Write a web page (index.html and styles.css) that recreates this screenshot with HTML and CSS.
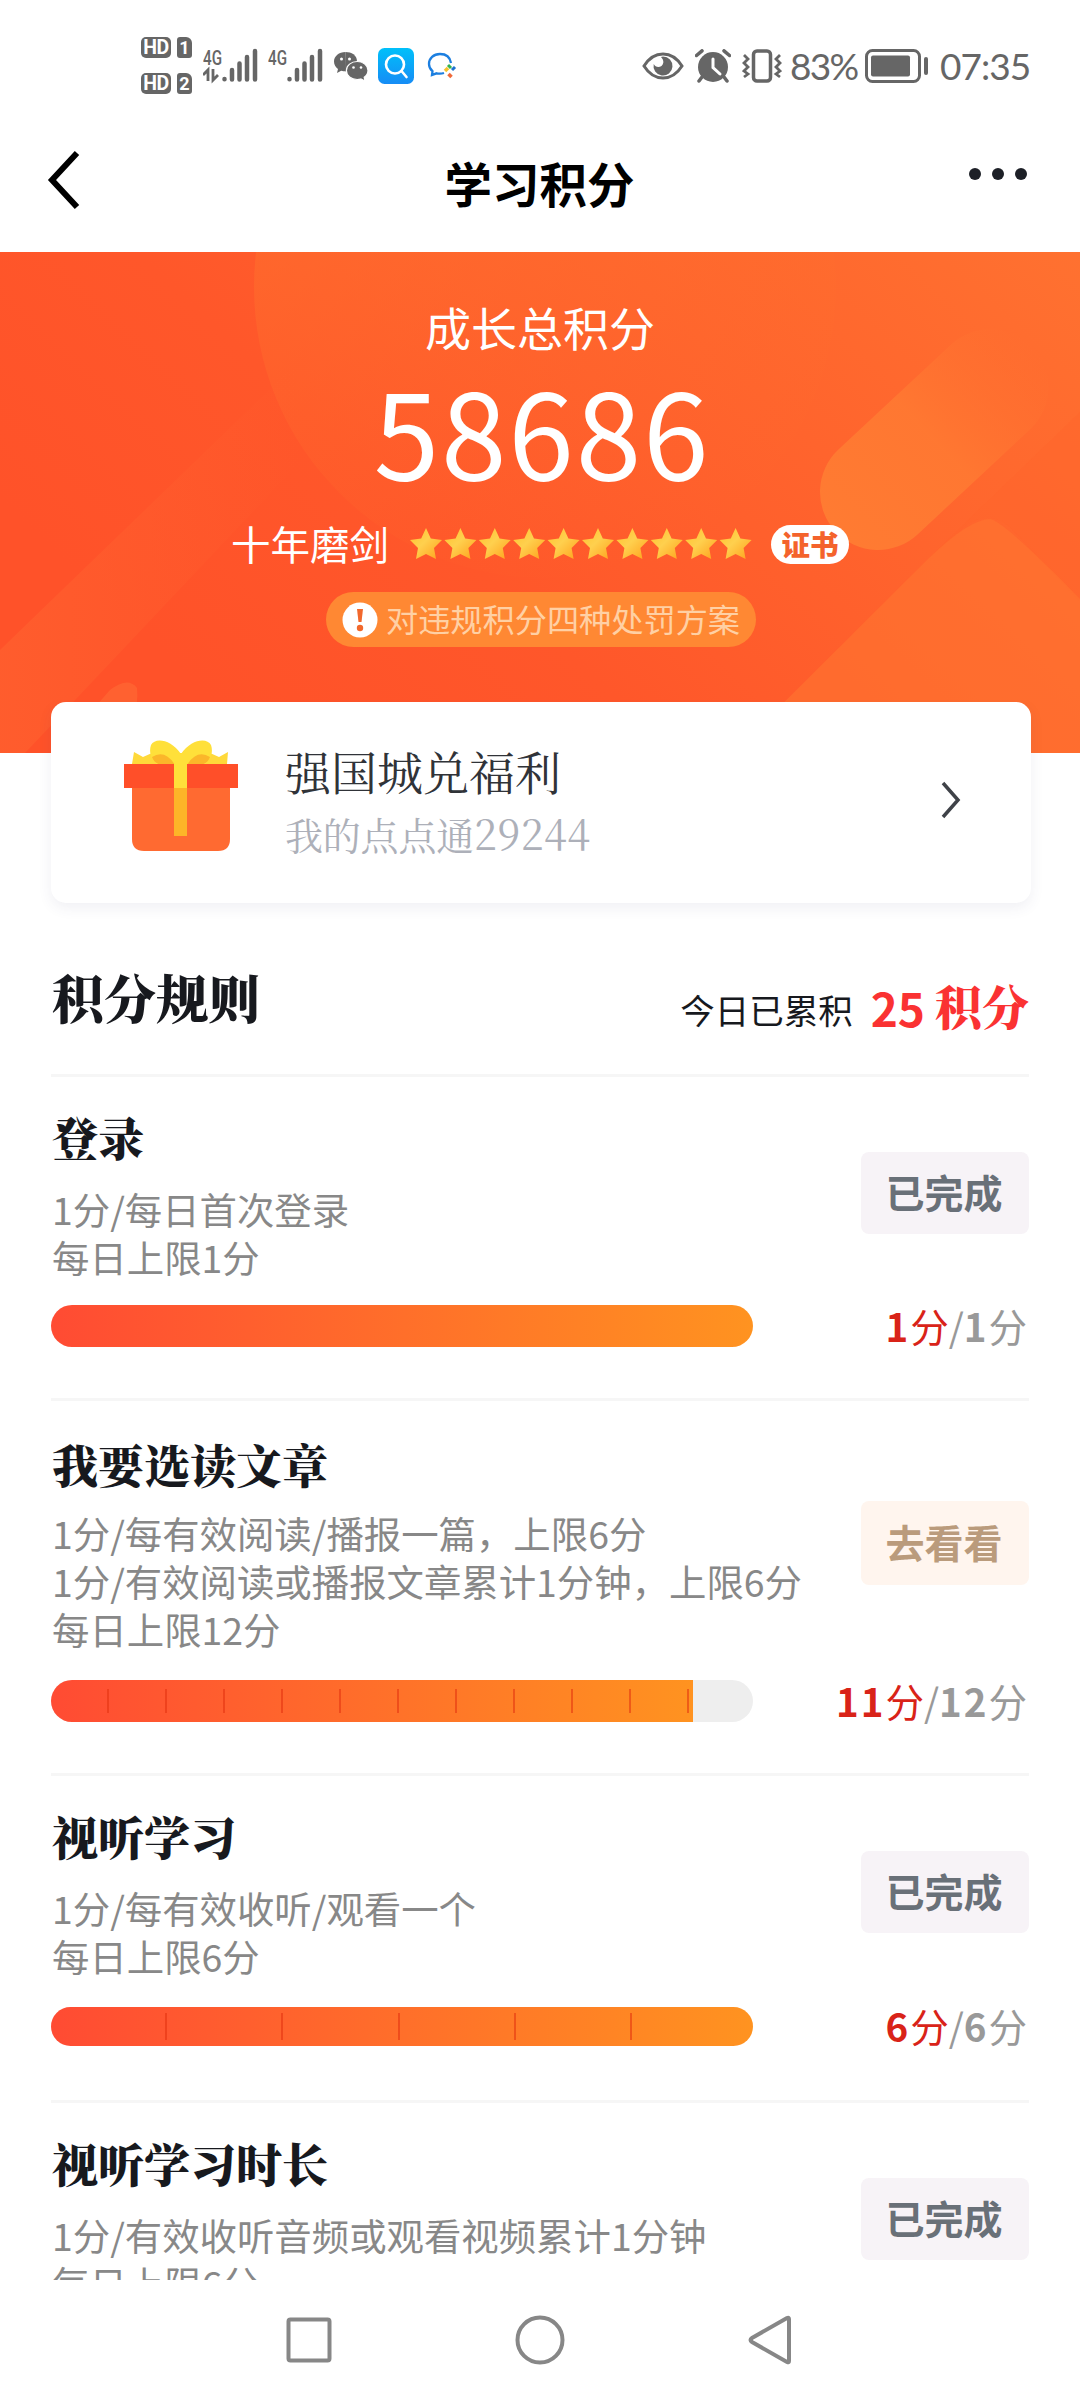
FILE: index.html
```html
<!DOCTYPE html>
<html lang="zh-CN">
<head>
<meta charset="utf-8">
<title>学习积分</title>
<link rel="stylesheet" href="styles.css">
</head>
<body>
<div class="screen">
  <header class="status">
    <div class="status-left">
      <div class="sims">
        <div class="sim"><span class="hd">HD</span><span class="slot">1</span></div>
        <div class="sim"><span class="hd">HD</span><span class="slot">2</span></div>
      </div>
      <svg class="signal" width="55" height="36" viewBox="0 0 55 36">
        <text x="0" y="16.5" textLength="19" lengthAdjust="spacingAndGlyphs">4G</text>
        <path d="M0 27l5-5v11M10 21v11l5-5" fill="none" stroke="#666" stroke-width="2.800"/>
        <path d="M21.500 31v.2M29 22v9.500M36.500 15.500v16M44 9v22.500M52 3v28.500" class="bars"/>
      </svg>
      <svg class="signal" width="55" height="36" viewBox="0 0 55 36">
        <text x="0" y="16.500" textLength="19" lengthAdjust="spacingAndGlyphs">4G</text>
        <path d="M21.500 31v.2M29 22v9.500M36.500 15.500v16M44 9v22.500M52 3v28.500" class="bars"/>
      </svg>
      <svg class="wechat" width="34" height="30" viewBox="0 0 34 30">
        <path d="M11.500 1C5 1 0 5.200 0 10.500c0 3.200 1.600 5.600 4 7.400L3 22l4.200-2.300c1.500.4 3 .6 4.500.6" fill="#666"/>
        <path d="M11 20.300C17 20.500 23 17 23 10.500S17.500 1 11.500 1z" fill="#666"/>
        <path d="M23.200 10.500c-6 0-10.800 4-10.800 9s4.800 9 10.800 9c1.300 0 2.500-.2 3.600-.5l4.200 2-.8-3.800c2.300-1.600 3.800-4 3.800-6.700 0-5-4.800-9-10.800-9z" fill="#666" stroke="#fff" stroke-width="1.200"/>
        <g fill="#fff"><circle cx="7.500" cy="8" r="1.500"/><circle cx="15.500" cy="8" r="1.500"/><circle cx="19.500" cy="16.500" r="1.300"/><circle cx="27" cy="16.500" r="1.300"/></g>
      </svg>
      <svg class="search" width="36" height="36" viewBox="0 0 36 36">
        <defs><linearGradient id="sky" x1="0" y1="0" x2="0" y2="1"><stop stop-color="#00c0fa"/><stop offset="1" stop-color="#168cf5"/></linearGradient></defs>
        <rect width="36" height="36" rx="6.500" fill="url(#sky)"/>
        <circle cx="17" cy="16.500" r="9" fill="none" stroke="#fff" stroke-width="2.600"/>
        <path d="M23.500 23l5 6" stroke="#fff" stroke-width="2.600" stroke-linecap="round"/>
      </svg>
      <svg class="chat" width="30" height="28" viewBox="0 0 30 28">
        <path d="M24 11C23 5 18.500 2 13 2 6.500 2 2 6.500 2 12c0 3 1.300 5.400 3.500 7.200L5 23l4.500-1.700c2.500.6 5 .5 7.500-.3" fill="none" stroke="#1c7fe0" stroke-width="2.300"/>
        <path d="M18 19l3-3" stroke="#f6c22d" stroke-width="3.500"/><path d="M21 13l3 3" stroke="#35b24a" stroke-width="3"/><path d="M25 18l3-3" stroke="#1d73d1" stroke-width="3"/><path d="M21.500 22l3 3" stroke="#ef6a3a" stroke-width="3.500"/>
      </svg>
    </div>
    <div class="status-right">
      <svg width="42" height="30" viewBox="0 0 42 30">
        <path d="M2 15C7 7 13 3 21 3s14 4 19 12c-5 8-11 12-19 12S7 23 2 15z" fill="none" stroke="#666" stroke-width="3"/>
        <path d="M21 5.500a9.500 9.500 0 1 1-9.300 7.500c2 4.500 8.800 3.800 9.600-1.200.3-2-.5-4-2.300-5.800z" fill="#666"/>
      </svg>
      <svg class="alarm" width="36" height="34" viewBox="0 0 36 34">
        <circle cx="18" cy="18" r="15" fill="#666"/>
        <path d="M1.500 6.500L7 1.800M34.500 6.500L29 1.800M7 28l-3 4M29 28l3 4" stroke="#666" stroke-width="3.500" stroke-linecap="round"/>
        <path d="M18 10v8.500l7 6.500" fill="none" stroke="#fff" stroke-width="3" stroke-linecap="round"/>
      </svg>
      <svg class="vibrate" width="40" height="34" viewBox="0 0 40 34">
        <rect x="11.500" y="2" width="17" height="30" rx="3.500" fill="none" stroke="#666" stroke-width="3.500"/>
        <path d="M2 6l4 4-4 4 4 4-4 4 4 3-4 3M38 6l-4 4 4 4-4 4 4 4-4 3 4 3" fill="none" stroke="#666" stroke-width="2.800"/>
      </svg>
      <span class="percent">83%</span>
      <svg class="battery" width="63" height="34" viewBox="0 0 63 34">
        <rect x="1.500" y="1.500" width="53" height="31" rx="6" fill="none" stroke="#666" stroke-width="3"/>
        <rect x="6" y="6.500" width="39" height="21" rx="2" fill="#666"/>
        <path d="M61 10v14" stroke="#666" stroke-width="4" stroke-linecap="round"/>
      </svg>
      <span class="clock">07:35</span>
    </div>
  </header>

  <nav class="titlebar">
    <svg class="back" width="34" height="60" viewBox="0 0 34 60"><path d="M30 3L5 30l25 27" fill="none" stroke="#000" stroke-width="6"/></svg>
    <h1>学习积分</h1>
    <svg class="more" width="60" height="14" viewBox="0 0 60 14"><circle cx="7" cy="7" r="6" fill="#1d2027"/><circle cx="30" cy="7" r="6" fill="#1d2027"/><circle cx="53" cy="7" r="6" fill="#1d2027"/></svg>
  </nav>

  <section class="hero">
    <svg class="hero-art" width="1080" height="501" viewBox="0 0 1080 501">
      <defs>
        <linearGradient id="base" x1="0" y1=".5" x2="1" y2="0"><stop offset="0" stop-color="#ff5229"/><stop offset=".3" stop-color="#ff572a"/><stop offset="1" stop-color="#ff7130"/></linearGradient>
        <linearGradient id="disc" x1=".2" y1="0" x2=".6" y2="1"><stop stop-color="#ff762e" stop-opacity=".7"/><stop offset="1" stop-color="#ff6a2c" stop-opacity="0"/></linearGradient>
        <linearGradient id="cap" x1="0" y1="0" x2="1" y2="0"><stop stop-color="#ff7b32"/><stop offset=".5" stop-color="#ff7a32" stop-opacity=".85"/><stop offset="1" stop-color="#ff7431" stop-opacity="0"/></linearGradient>
        <linearGradient id="band" x1="0" y1="0" x2="1" y2="0"><stop stop-color="#ff6530" stop-opacity=".55"/><stop offset="1" stop-color="#ff6530" stop-opacity="0"/></linearGradient>
      </defs>
      <rect width="1080" height="501" fill="url(#base)"/>
      <circle cx="545" cy="35" r="291" fill="url(#disc)"/>
      <path d="M930 305L1080 160v190L1010 275q-22-18-46 0z" fill="#ff652b" opacity=".3"/>
      <rect x="-58" y="-58" width="270" height="116" rx="58" fill="url(#cap)" transform="translate(878 240) rotate(-43)"/>
      <path d="M733 501L930 305q40-38 60-38 14 2 90 80V501z" fill="#ff7430" opacity=".6"/>
      <path d="M0 398L300 108V210L25 501H0z" fill="url(#band)"/>
      <path d="M55 501L110 438q18-14 27-2 3 30-22 65z" fill="#ff6c36" opacity=".6"/>
    </svg>
    <div class="hero-body">
      <p class="hero-label">成长总积分</p>
      <p class="total">58686</p>
      <div class="rank">
        <span class="rank-name">十年磨剑</span>
        <svg class="stars" width="344" height="34" viewBox="0 0 344 34">
          <defs>
            <linearGradient id="gold" x1="0" y1="0" x2="1" y2="1"><stop stop-color="#ffc02d"/><stop offset=".45" stop-color="#ffd04e"/><stop offset="1" stop-color="#ff9f1a"/></linearGradient>
            <path id="star" d="M17 1l4.800 10.500L33 13l-8 8 2 11-10-5-10 5 2-11-8-8 11.200-1.500z" fill="url(#gold)"/>
          </defs>
          <use href="#star"/><use href="#star" x="34.400"/><use href="#star" x="68.800"/><use href="#star" x="103.200"/><use href="#star" x="137.600"/><use href="#star" x="172"/><use href="#star" x="206.400"/><use href="#star" x="240.800"/><use href="#star" x="275.200"/><use href="#star" x="309.600"/>
        </svg>
        <span class="cert">证书</span>
      </div>
      <div class="notice">
        <svg width="36" height="36" viewBox="0 0 36 36"><circle cx="18" cy="18" r="17.500" fill="#fff"/><path d="M15 7h6l-1.500 13h-3z" fill="#f2682c"/><circle cx="18" cy="26" r="3.200" fill="#f2682c"/></svg>
        <span>对违规积分四种处罚方案</span>
      </div>
    </div>
  </section>

  <main class="content">
    <section class="card">
      <svg class="gift" width="114" height="112" viewBox="0 0 114 112">
        <path d="M8 24l2-12 9 5 9-4h58l9 4 9-5-1 12z" fill="#ffd93a"/>
        <path d="M57 14C47-1 31-3 27 5c-3 9 2 16 6 19h48c4-3 9-10 6-19C83-3 67-1 57 14z" fill="#ffe03a"/>
        <path d="M28 17q13-8 23 8H37q-7-2-9-8zM86 17q-13-8-23 8h14q7-2 9-8z" fill="#fbb62a"/>
        <path d="M51 13h12v14H51z" fill="#ffe03a"/>
        <path d="M8 46h98v53q0 12-12 12H20Q8 111 8 99z" fill="#ff6a31"/>
        <path d="M0 24h114v24H0z" fill="#ff4f29"/>
        <path d="M50 24h13v24H50z" fill="#ffe03a"/><path d="M50 48h13v48H50z" fill="#fdb528"/>
      </svg>
      <div class="card-text"><p class="card-title">强国城兑福利</p><p class="card-sub">我的点点通<span>29244</span></p></div>
      <svg class="go" width="22" height="40" viewBox="0 0 22 40"><path d="M3 3l15 17L3 37" fill="none" stroke="#3f4248" stroke-width="3.500"/></svg>
    </section>

    <div class="rules-head">
      <h2>积分规则</h2>
      <p class="today">今日已累积<b class="today-num">25</b><b class="today-unit">积分</b></p>
    </div>

    <section class="rule rule-login">
      <div class="rule-top">
        <div><h3>登录</h3><p>1分/每日首次登录<br>每日上限1分</p></div>
        <button class="btn">已完成</button>
      </div>
      <div class="rule-bottom">
        <div class="track"><div class="fill" style="width:100%"></div></div>
        <p class="score"><span class="got"><b>1</b>分</span>/<b>1</b>分</p>
      </div>
    </section>

    <section class="rule rule-read">
      <div class="rule-top">
        <div><h3>我要选读文章</h3><p>1分/每有效阅读/播报一篇，上限6分<br>1分/有效阅读或播报文章累计1分钟，上限6分<br>每日上限12分</p></div>
        <button class="btn btn-go">去看看</button>
      </div>
      <div class="rule-bottom">
        <div class="track"><div class="fill" style="width:91.500%"><i></i><i></i><i></i><i></i><i></i><i></i><i></i><i></i><i></i><i></i><i></i></div></div>
        <p class="score"><span class="got"><b>11</b>分</span>/<b>12</b>分</p>
      </div>
    </section>

    <section class="rule rule-watch">
      <div class="rule-top">
        <div><h3>视听学习</h3><p>1分/每有效收听/观看一个<br>每日上限6分</p></div>
        <button class="btn">已完成</button>
      </div>
      <div class="rule-bottom">
        <div class="track steps-6"><div class="fill" style="width:100%"><i></i><i></i><i></i><i></i><i></i></div></div>
        <p class="score"><span class="got"><b>6</b>分</span>/<b>6</b>分</p>
      </div>
    </section>

    <section class="rule">
      <div class="rule-top">
        <div><h3>视听学习时长</h3><p>1分/有效收听音频或观看视频累计1分钟<br>每日上限6分</p></div>
        <button class="btn">已完成</button>
      </div>
    </section>
  </main>

  <footer class="navbar">
    <svg width="50" height="50" viewBox="0 0 50 50"><rect x="4.500" y="4.500" width="41" height="41" rx="2" fill="none" stroke="#878787" stroke-width="4"/></svg>
    <svg width="50" height="50" viewBox="0 0 50 50"><circle cx="25" cy="25" r="22.500" fill="none" stroke="#878787" stroke-width="4"/></svg>
    <svg width="50" height="50" viewBox="0 0 50 50"><path d="M43 4v42q0 2-2 1L6 27q-3-2 0-4L41 3q2-1 2 1z" fill="none" stroke="#878787" stroke-width="4"/></svg>
  </footer>
</div>
</body>
</html>
```
FILE: styles.css
```css
* { box-sizing: border-box; margin: 0; padding: 0; }
body { background: #fff; font-family: "Noto Sans CJK SC", sans-serif; color: #17191e; }
svg { display: block; flex: none; }
.screen { width: 1080px; height: 2400px; overflow: hidden; display: flex; flex-direction: column; }

.status { height: 112px; flex: none; display: flex; justify-content: space-between; padding: 0 50px 0 141px; color: #666; font-family: Lato, sans-serif; }
.status-left, .status-right { display: flex; align-items: center; height: 131px; }
.sims { display: flex; flex-direction: column; gap: 15px; margin-right: 11px; }
.sim { display: flex; gap: 6px; font: 700 18px/22px Roboto, sans-serif; color: #fff; text-align: center; }
.hd { width: 30px; height: 21px; border-radius: 5px; background: #666; font-size: 19.500px; letter-spacing: -.5px; }
.slot { width: 15px; height: 21px; border-radius: 3px 6px 3px 3px; background: #666; }
.signal { margin-right: 10px; }
.signal text { font: 500 20px Roboto, sans-serif; fill: #666; }
.bars { fill: none; stroke: #666; stroke-width: 4.500; stroke-linecap: round; }
.wechat { margin-left: 1px; }
.search { margin-left: 10px; }
.chat { margin-left: 13px; }
.alarm { margin-left: 11px; }
.vibrate { margin-left: 11px; }
.percent { width: 68px; margin: 0 0 1px 8px; font-size: 37px; letter-spacing: -1.700px; white-space: nowrap; }
.battery { margin-left: 7px; }
.clock { margin: 0 0 1px 12px; font-size: 37px; letter-spacing: -1px; width: 90px; white-space: nowrap; }

.titlebar { height: 140px; flex: none; display: flex; justify-content: space-between; align-items: center; padding: 0 52px 6px 47px; }
.back { margin-top: 2px; }
.titlebar h1 { margin-left: 30px; padding-top: 7px; font-size: 47.500px; line-height: 60px; font-weight: 700; color: #000; }
.more { margin-top: -10px; }

.hero { height: 501px; flex: none; display: grid; color: #fff; text-align: center; }
.hero-art, .hero-body { grid-area: 1 / 1; }
.hero-body { display: flex; flex-direction: column; align-items: center; z-index: 1; }
.hero-label { margin-top: 45px; font-size: 46px; line-height: 58px; }
.total { margin: 14px 0 0 4px; font-size: 118px; line-height: 120px; letter-spacing: 1.800px; }
.rank { display: flex; align-items: center; height: 40px; margin-top: 35px; }
.rank-name { font-size: 39.500px; line-height: 40px; margin-top: -3px; }
.stars { margin-left: 20px; }
.cert { margin-left: 18px; width: 78px; height: 39px; border-radius: 20px; background: #fff; color: #f4632c; font-size: 28.500px; line-height: 37px; font-weight: 900; }
.notice { display: flex; align-items: center; justify-content: center; gap: 8px; width: 430px; height: 55px; margin: 28px 0 0 2px; border-radius: 28px; background: #ff8833; color: #ffd0a4; font-size: 32.200px; line-height: 50px; }
.notice span { margin-top: -3px; }

.content { height: 1580px; flex: none; overflow: hidden; margin-top: -53px; padding: 2px 51px 0; position: relative; z-index: 2; }
.card { display: flex; align-items: center; height: 201px; width: 980px; padding: 0 69px 0 73px; border-radius: 15px; background: #fff; box-shadow: 0 5px 14px rgba(60, 60, 120, .08); }
.gift { margin-bottom: 14px; }
.go { margin-bottom: 6px; }
.card-text { flex: 1; margin: 0 0 6px 47px; font-family: "Noto Serif CJK SC", "Noto Sans CJK SC", serif; }
.card-title { font-size: 46px; line-height: 60px; color: #303338; font-weight: 400; }
.card-sub { font-size: 38px; line-height: 50px; margin-top: 8px; color: #adb0b9; font-weight: 400; letter-spacing: -.2px; }
.card-sub span { font-size: 41px; letter-spacing: .4px; }

.rules-head { display: flex; justify-content: space-between; height: 171px; padding: 64px 0 0 1px; width: 978px; }
.rules-head h2, .rule h3, .today-unit { font-family: "Noto Serif CJK SC", "Noto Sans CJK SC", serif; font-weight: 900; }
.rules-head h2 { font-size: 52px; line-height: 60px; }
.today { display: flex; align-items: center; height: 60px; margin-top: 12px; font-size: 34.500px; white-space: nowrap; }
.today-num { margin: -4px 0 0 18px; font-size: 46px; line-height: 60px; color: #fa3232; }
.today-unit { margin: -8px 0 0 10px; font-size: 47px; line-height: 60px; color: #fa3232; }

.rule { width: 978px; border-top: 3px solid #f6f6f6; padding: 36px 0 51px; }
.rule-top { display: flex; justify-content: space-between; align-items: center; }
.rule h3 { font-size: 46px; line-height: 46px; margin: 0 0 26px 1px; }
.rule-top p { margin: 0 0 2px 1px; font-size: 37.400px; line-height: 48px; color: #888; white-space: nowrap; }
.rule-read { padding-top: 39px; }
.rule-read h3 { margin-bottom: 23px; }
.btn { width: 168px; height: 82px; margin-bottom: 10px; flex: none; border: 0; border-radius: 8px; background: #f7f3f7; color: #697078; font: 700 39px/78px "Noto Sans CJK SC", sans-serif; padding: 0 2px 4px 0; }
.btn-go { background: #fff5ee; color: #ba9b7c; height: 84px; }
.rule-bottom { display: flex; justify-content: space-between; align-items: center; height: 42px; margin-top: 25px; }
.rule-login .rule-bottom { margin-top: 22px; }
.rule-watch .rule-bottom { height: 39px; }
.rule-watch { padding-bottom: 54px; }
.track { width: 702px; height: 100%; border-radius: 21px; overflow: hidden; background: #eee; }
.fill { height: 100%; display: flex; align-items: center; background: linear-gradient(90deg, #ff4b33, #ff6b2b 45%, #ff9320); }
.fill i { flex: none; width: 2px; height: 24px; margin-left: 56px; background: rgba(225, 50, 15, .55); }
.steps-6 .fill i { height: 27px; margin-left: 114.200px; }
.score { font-size: 38.500px; line-height: 42px; color: #999; padding: 0 2px 3px 0; white-space: nowrap; }
.score b { font-weight: 700; letter-spacing: 2px; }
.got { color: #d92318; }

.navbar { flex: 1; display: flex; justify-content: center; gap: 181px; padding-top: 35px; background: #fff; }
```
